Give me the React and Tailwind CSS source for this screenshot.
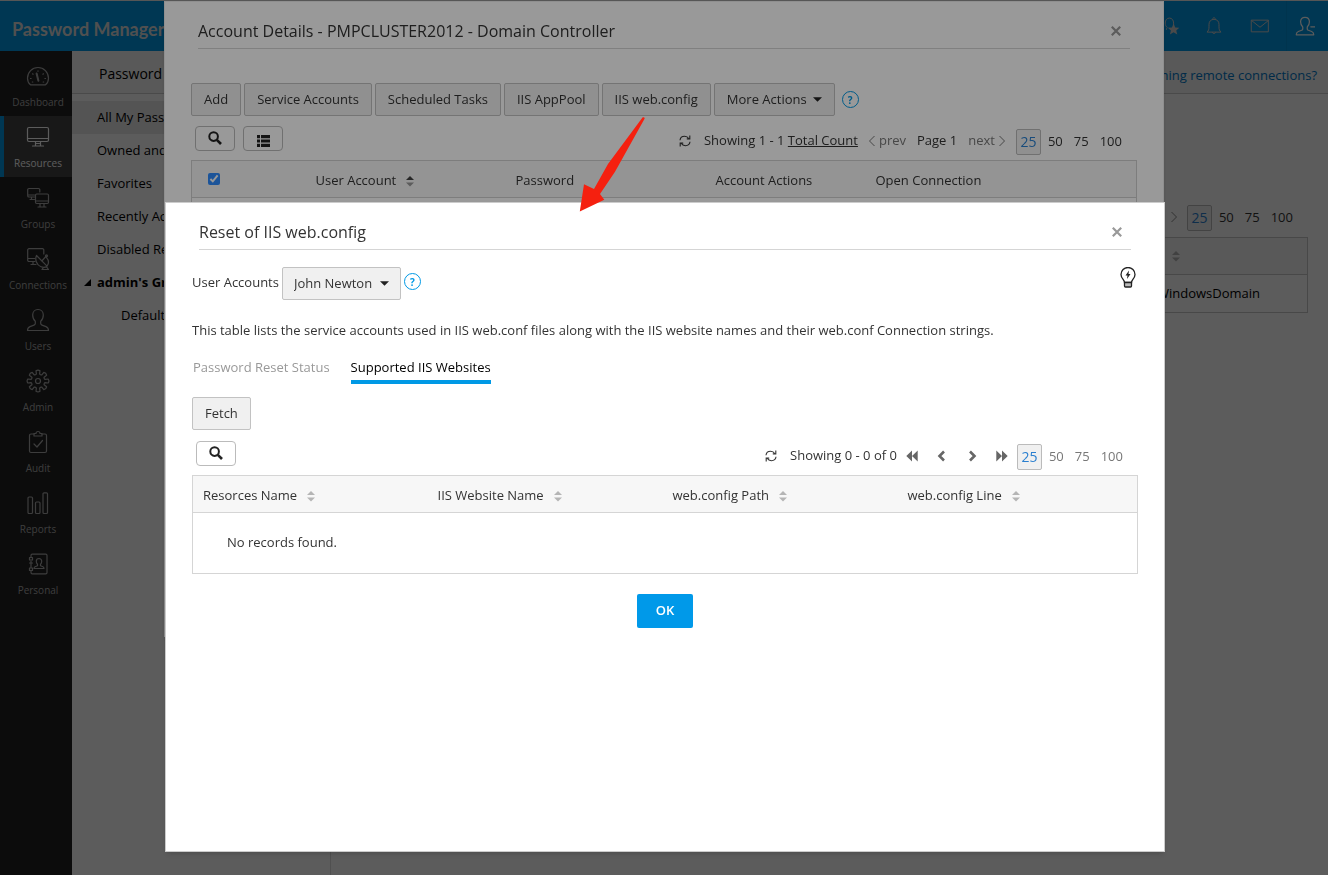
import React from 'react';

const svgProps = {
  viewBox: '0 0 24 24',
  fill: 'none',
  stroke: 'currentColor',
  strokeWidth: 1.2,
  strokeLinejoin: 'round',
  strokeLinecap: 'round',
  'aria-hidden': true
};

const PERSON_PATH =
  'M12 1.500c-3.200 0-5.300 2.300-5.300 5.500 0 2.600 1 4.900 2.600 6.200v2.300c0 .8-.5 1.300-1.300 1.600l-4 1.500c-1.800.7-2.500 1.900-2.500 3.900h21c0-2-.7-3.200-2.500-3.900l-4-1.500c-.8-.3-1.300-.8-1.300-1.600v-2.300c1.600-1.300 2.600-3.600 2.600-6.200 0-3.200-2.100-5.500-5.300-5.500z';

// Eight rounded teeth around a centre point
const gearPath = () => {
  const point = (radius, degrees) => {
    const rad = (degrees * Math.PI) / 180;
    return `${(12 + radius * Math.cos(rad)).toFixed(2)} ${(12 + radius * Math.sin(rad)).toFixed(2)}`;
  };
  let path = '';
  for (let i = 0; i < 8; i++) {
    const a = i * 45 - 90;
    path += `${i === 0 ? 'M' : 'L'}${point(7.2, a - 13)} L${point(10.4, a - 11)} Q${point(11.600, a)} ${point(10.4, a + 11)} L${point(7.2, a + 13)} Q${point(6.3, a + 22.5)} ${point(7.2, a + 32)} `;
  }
  return `${path}Z`;
};

const icons = {
  dashboard: (
    <>
      <path d="M4.500 20.800h15c2-1.600 3-3.900 3-6.600C22.500 8.300 17.800 3.500 12 3.500S1.500 8.300 1.500 14.200c0 2.700 1 5 3 6.600z" />
      <path d="M10.600 9.500l1.800 7.200" strokeWidth="2" />
      <path d="M4.500 14.500h.6M18.900 14.500h.6M6.600 9.800l.5.400M16.900 10.200l.5-.4M12 6.800v.5M6.300 18h.5M17.200 18h.5" />
    </>
  ),
  resources: (
    <>
      <rect x="1.500" y="2.500" width="21" height="14" rx="1.500" />
      <path d="M1.500 13.500h21M9.500 16.500v4M14.500 16.500v4M6.500 21h11M10.500 18.500h3" />
    </>
  ),
  groups: (
    <>
      <path d="M8.500 11H3a1.300 1.300 0 0 1-1.300-1.300V3.800A1.300 1.300 0 0 1 3 2.500h9.500a1.300 1.300 0 0 1 1.300 1.300V6M1.700 9h6.800M4 13.500h4.500M5.500 11v2.500" />
      <rect x="9.500" y="8" width="13" height="9.500" rx="1.200" />
      <path d="M9.500 15h13M14 17.500V21M18 17.500V21M12 21h8" />
    </>
  ),
  connections: (
    <>
      <path d="M9 14.500H3a1.300 1.300 0 0 1-1.300-1.300V3A1.300 1.300 0 0 1 3 1.700h13.500A1.300 1.300 0 0 1 17.800 3v4M1.700 11.500h7M5 17.500h5M7 14.500v3" />
      <path d="M10.500 8.500c-1.800 4 0 9.700 4.500 11.300 2.200.8 4.500.5 6-.6zM21 19.200c1.800-2.500 1.800-6-.5-8.500M15.800 14l4.500-5M17.500 20.300l-1.500 2.200h6.500l-2-2.700" />
      <circle cx="20.500" cy="8.800" r="1" />
    </>
  ),
  users: <path d={PERSON_PATH} />,
  admin: (
    <>
      <path d={gearPath()} />
      <circle cx="12" cy="12" r="2.500" />
    </>
  ),
  audit: (
    <>
      <path d="M8 4H5a1.500 1.500 0 0 0-1.500 1.500v15.500A1.500 1.500 0 0 0 5 22.500h14a1.500 1.500 0 0 0 1.500-1.500V5.500A1.500 1.500 0 0 0 19 4h-3" />
      <path d="M8 6V3.500h2c0-1.200.8-2 2-2s2 .8 2 2h2V6zM8 14l3 3 5.500-6.500" />
    </>
  ),
  reports: (
    <>
      <rect x="2" y="6" width="4.500" height="16.500" rx="1" />
      <rect x="9.500" y="11" width="4.500" height="11.500" rx="1" />
      <rect x="17" y="1.800" width="4.500" height="20.700" rx="1" />
    </>
  ),
  personal: (
    <>
      <path d="M5 5.500V3.500a1.300 1.300 0 0 1 1.300-1.300h13.400A1.300 1.300 0 0 1 21 3.500v17a1.300 1.300 0 0 1-1.300 1.300H6.300A1.300 1.300 0 0 1 5 20.500v-2M5 9v6.500" />
      <path d="M3.500 5.500h3v2.500h-3zM3.500 16h3v2.500h-3zM3.500 11h3" />
      <path d="M13 6.500c-1.700 0-2.700 1.200-2.700 2.800 0 1.200.5 2.300 1.200 2.900v1.500l-2.500 1c-.7.300-1 1-1 1.800h10c0-.8-.3-1.500-1-1.800l-2.500-1v-1.500c.7-.6 1.200-1.700 1.200-2.900 0-1.600-1-2.800-2.700-2.800z" />
    </>
  )
};

const navItems = [
  { icon: 'dashboard', label: 'Dashboard' },
  { icon: 'resources', label: 'Resources', active: true },
  { icon: 'groups', label: 'Groups' },
  { icon: 'connections', label: 'Connections' },
  { icon: 'users', label: 'Users' },
  { icon: 'admin', label: 'Admin' },
  { icon: 'audit', label: 'Audit' },
  { icon: 'reports', label: 'Reports' },
  { icon: 'personal', label: 'Personal' }
];

const views = ['All My Passwords', 'Owned and Managed', 'Favorites', 'Recently Accessed', 'Disabled Resources'];

function SortIcon({ asc = false }) {
  return (
    <svg viewBox="0 0 8 12" className="w-2 h-3 shrink-0" aria-hidden="true">
      <path d="M0 5L4 1l4 4z" fill={asc ? '#444' : '#b5b5b5'} />
      <path d="M0 7.500h8l-4 4z" fill={asc ? '#999' : '#b5b5b5'} />
    </svg>
  );
}

function Caret() {
  return (
    <svg viewBox="0 0 10 5" className="w-[9px] h-[5px]" aria-hidden="true">
      <path d="M0 0h10L5 5z" fill="#222" />
    </svg>
  );
}

function SearchButton() {
  return (
    <button type="button" aria-label="Search" className="flex h-[25px] w-10 items-center justify-center rounded border border-[#bbb] bg-white pb-0.5">
      <svg viewBox="0 0 14 14" className="w-3.5 h-3.5" fill="none" stroke="#222" aria-hidden="true">
        <circle cx="5.600" cy="5.600" r="4.300" strokeWidth="2" />
        <path d="M8.800 8.800l4.200 4.200" strokeWidth="2.600" />
      </svg>
    </button>
  );
}

function RefreshButton() {
  return (
    <button type="button" aria-label="Refresh">
      <svg viewBox="0 0 12 12" className="w-3 h-3" fill="none" stroke="#333" strokeWidth="1.100" aria-hidden="true">
        <path d="M1 5.200C1.300 2.600 3.300 1.300 5.600 1.300c1.900 0 3.200.7 4.300 2.400M11 6.800c-.3 2.600-2.300 3.900-4.600 3.900-1.900 0-3.200-.7-4.300-2.400" />
        <path d="M10.800.5v3.400H7.800M1.200 11.500V8.100h3" />
      </svg>
    </button>
  );
}

function HelpButton() {
  return (
    <button
      type="button"
      aria-label="Help"
      className="flex h-[17px] w-[17px] items-center justify-center rounded-full border-[1.5px] border-[#0099e5] text-[10px] leading-none font-bold text-[#0099e5]"
    >
      ?
    </button>
  );
}

function PageSizes({ muted = false }) {
  return (
    <div className={`mt-0.5 flex items-center gap-[11px] text-[13px] ${muted ? 'text-[#777]' : 'text-[#333]'}`}>
      <button
        type="button"
        className="-mr-1 flex h-[26px] w-[25px] items-center justify-center rounded-xs border border-[#bbb] bg-[#f0f0f0] text-sm font-medium text-[#2a7fcf]"
      >
        25
      </button>
      <button type="button">50</button>
      <button type="button">75</button>
      <button type="button">100</button>
    </div>
  );
}

function CloseButton() {
  return (
    <button type="button" aria-label="Close" className="text-[#999]">
      <svg viewBox="0 0 10 10" className="w-2.5 h-2.5" stroke="currentColor" strokeWidth="2.200" aria-hidden="true">
        <path d="M.8.800l8.400 8.400M9.200.800L.8 9.200" />
      </svg>
    </button>
  );
}

function GreyButton({ children }) {
  return (
    <button type="button" className="flex h-[33px] items-center gap-1.5 rounded-xs border border-[#c2c2c2] bg-[#f0f0f0] px-3 whitespace-nowrap text-[#333]">
      {children}
    </button>
  );
}

function DialogTitle({ children }) {
  return (
    <div className="mx-[7px] flex h-[47px] items-center justify-between border-b border-[#d5d5d5] pt-3 pr-[9px]">
      <h2 className="text-base leading-5 text-[#333]">{children}</h2>
      <CloseButton />
    </div>
  );
}

function TopBar() {
  return (
    <header className="flex h-[50px] items-center justify-between bg-[#0099e5] pl-3">
      <h1 className="pt-1.5 font-[Lato,sans-serif] text-lg font-bold whitespace-nowrap text-[#ddd]">Password Manager Pro</h1>
      <div className="flex h-full items-center text-[#ccc]">
        <button type="button" aria-label="Favorite users" className="mr-[25px]">
          <svg {...svgProps} className="w-5 h-5">
            <path d="M9 16c0-1 .3-1.600 1-2-1.500-1.200-2.500-3-2.500-5.500C7.500 5 9.500 2.500 12.500 2.500S17.500 5 17.500 8.500V11" />
            <path d="M17.500 9l2 4.700 5 .4-3.800 3.200 1.200 4.900-4.400-2.700-4.400 2.700 1.200-4.900-3.800-3.200 5-.4z" fill="currentColor" stroke="none" />
          </svg>
        </button>
        <button type="button" aria-label="Notifications" className="mr-[26px]">
          <svg {...svgProps} className="w-5 h-5">
            <path d="M4 19c1.500-1.500 2-3 2-6v-3c0-3.500 2.300-6 6-6s6 2.500 6 6v3c0 3 .5 4.500 2 6zM10.500 4c0-3 3-3 3 0M10 19.500c.3 2.300 3.700 2.300 4 0" />
          </svg>
        </button>
        <button type="button" aria-label="Messages" className="mr-4">
          <svg {...svgProps} className="w-5 h-5">
            <path d="M2 5h20v14H2zM2 5.500l10 8 10-8" />
          </svg>
        </button>
        <button type="button" aria-label="My account" className="flex h-full items-center border-l border-[#0090d8] pr-[13px] pl-2 text-white">
          <svg {...svgProps} strokeWidth="1.500" className="w-5 h-5">
            <path d={PERSON_PATH} />
            <path d="M19 13h5" />
          </svg>
        </button>
      </div>
    </header>
  );
}

function SideNav() {
  return (
    <nav className="w-[72px] shrink-0 bg-[#222] pt-1">
      {navItems.map((item) => (
        <a
          key={item.label}
          href="#"
          className={`flex h-[61px] flex-col items-center border-l-4 pt-[9px] text-[10px] ${
            item.active ? 'border-[#0099e5] bg-[#444] text-white' : 'border-transparent text-[#aaa]'
          }`}
        >
          <svg {...svgProps} className="w-6 h-6 shrink-0">{icons[item.icon]}</svg>
          <span className="mt-1.5 leading-4">{item.label}</span>
        </a>
      ))}
    </nav>
  );
}

function ViewsPanel() {
  return (
    <aside className="w-[259px] shrink-0 border-r border-[#ddd] text-[13px] text-black">
      <div className="flex h-[43px] items-center border-b border-[#ccc] bg-[#f5f5f5] pt-1 pl-[27px] text-sm">Password Views</div>
      <ul className="pt-[7px]">
        {views.map((view, i) => (
          <li key={view}>
            <a href="#" className={`flex h-[33px] items-center pl-[25px] whitespace-nowrap ${i === 0 ? 'bg-[#e8e8e8]' : ''}`}>
              {view}
            </a>
          </li>
        ))}
        <li>
          <a href="#" className="flex h-[33px] items-center gap-1.5 pl-3 font-bold whitespace-nowrap">
            <svg viewBox="0 0 7 7" className="w-[7px] h-[7px]" aria-hidden="true">
              <path d="M7 0v7H0z" />
            </svg>
            admin's Groups
          </a>
        </li>
        <li>
          <a href="#" className="flex h-[33px] items-center pl-[49px]">Default Group</a>
        </li>
      </ul>
    </aside>
  );
}

function ResourcesPage() {
  return (
    <main className="min-w-0 flex-1 text-[13px]">
      <div className="flex h-[43px] items-center justify-end border-b border-[#ccc] bg-[#f5f5f5] pt-2 pr-[11px]">
        <a href="#" className="whitespace-nowrap text-[#0078c8]">Trouble launching remote connections?</a>
      </div>
      <div className="pt-[109px] pr-5 pl-5">
        <div className="flex items-center justify-end gap-2.5 pr-[15px]">
          <svg viewBox="0 0 6 12" className="w-1.5 h-3" fill="none" stroke="#888" aria-hidden="true">
            <path d="M.5 1l5 5-5 5" />
          </svg>
          <PageSizes />
        </div>
        <table className="mt-[6px] w-full border border-[#c8c8c8] text-left">
          <thead>
            <tr className="h-[37px] border-b border-[#c8c8c8] bg-[#f7f7f7]">
              <th aria-label="Resource" />
              <th aria-label="Type" className="w-[146px] pl-[15px]">
                <SortIcon />
              </th>
            </tr>
          </thead>
          <tbody>
            <tr className="h-[38px]">
              <td />
              <td>
                <div className="flex justify-end pr-[47px] text-black">WindowsDomain</div>
              </td>
            </tr>
          </tbody>
        </table>
      </div>
    </main>
  );
}

function AccountDetailsDialog() {
  return (
    <section className="min-h-[636px] w-full max-w-[1000px] border border-[#eee] bg-white px-[26px] text-[13px] text-[#333] shadow-md">
      <DialogTitle>Account Details - PMPCLUSTER2012 - Domain Controller</DialogTitle>
      <div className="mt-[34px] flex items-center gap-[3px]">
        <GreyButton>Add</GreyButton>
        <GreyButton>Service Accounts</GreyButton>
        <GreyButton>Scheduled Tasks</GreyButton>
        <GreyButton>IIS AppPool</GreyButton>
        <GreyButton>IIS web.config</GreyButton>
        <GreyButton>
          More Actions
          <Caret />
        </GreyButton>
        <div className="pl-1">
          <HelpButton />
        </div>
      </div>
      <div className="mt-2.5 flex h-[29px] items-center justify-between pr-[15px] pl-1">
        <div className="flex gap-2 pb-1">
          <SearchButton />
          <button type="button" aria-label="Columns" className="flex h-[25px] w-10 items-center justify-center rounded border border-[#bbb] bg-white">
            <svg viewBox="0 0 13 12" className="mt-1 w-[13px] h-3" fill="#222" aria-hidden="true">
              <path d="M0 0h3v3.200H0zM4 0h9v3.200H4zM0 4.400h3v3.200H0zM4 4.400h9v3.200H4zM0 8.800h3V12H0zM4 8.800h9V12H4z" />
            </svg>
          </button>
        </div>
        <div className="flex items-center gap-[11px]">
          <RefreshButton />
          <span className="pl-0.5">
            Showing 1 - 1 <a href="#" className="underline">Total Count</a>
          </span>
          <button type="button" className="flex items-center gap-1 text-[#777]">
            <svg viewBox="0 0 6 12" className="w-1.5 h-3" fill="none" stroke="currentColor" aria-hidden="true">
              <path d="M5.500 1l-5 5 5 5" />
            </svg>
            prev
          </button>
          <span>Page 1</span>
          <button type="button" className="flex items-center gap-1 text-[#777]">
            next
            <svg viewBox="0 0 6 12" className="w-1.5 h-3" fill="none" stroke="currentColor" aria-hidden="true">
              <path d="M.5 1l5 5-5 5" />
            </svg>
          </button>
          <PageSizes />
        </div>
      </div>
      <table className="mt-[5px] w-full table-fixed border border-[#d0d0d0] text-left">
        <thead>
          <tr className="h-[37px] border-b border-[#d0d0d0] bg-[#f7f7f7]">
            <th className="w-[124px] pl-4">
              <input type="checkbox" defaultChecked aria-label="Select all accounts" className="block h-3 w-3 accent-[#2f8cff]" />
            </th>
            <th className="w-[200px] pt-1 font-normal">
              <span className="flex items-center gap-2.5">
                User Account
                <SortIcon asc />
              </span>
            </th>
            <th className="w-[200px] pt-1 font-normal">Password</th>
            <th className="w-[160px] pt-1 font-normal">Account Actions</th>
            <th className="pt-1 font-normal">Open Connection</th>
          </tr>
        </thead>
        <tbody>
          <tr className="h-10">
            <td colSpan={5} />
          </tr>
        </tbody>
      </table>
    </section>
  );
}

const pagerArrows = [
  { label: 'First page', d: 'M6 .5L.3 6 6 11.500zM11.700.5L6 6l5.700 5.500z', fill: true },
  { label: 'Previous page', d: 'M8 1.500L3.500 6 8 10.500' },
  { label: 'Next page', d: 'M4 1.500L8.500 6 4 10.500' },
  { label: 'Last page', d: 'M.3.500L6 6 .3 11.500zM6 .5L11.700 6 6 11.500z', fill: true }
];

function ResetDialog() {
  return (
    <section className="relative min-h-[650px] w-full max-w-[1000px] border border-[#ccc] bg-white px-[26px] text-[13px] text-[#333] shadow-md">
      <DialogTitle>Reset of IIS web.config</DialogTitle>
      <div className="mt-[17px] flex h-[33px] items-center justify-between pr-0.5">
        <div className="flex items-center">
          <label htmlFor="user-account" className="pb-0.5">User Accounts</label>
          <div className="relative ml-[3px]">
            <select
              id="user-account"
              className="block h-[33px] appearance-none rounded-xs border border-[#c2c2c2] bg-[#f0f0f0] pr-[27px] pl-[11px]"
            >
              <option>John Newton</option>
            </select>
            <span className="pointer-events-none absolute inset-y-0 right-3 flex items-center">
              <Caret />
            </span>
          </div>
          <div className="pb-1 pl-[3px]">
            <HelpButton />
          </div>
        </div>
        <button type="button" aria-label="Tips" className="pb-3">
          <svg viewBox="0 0 16 21" className="w-4 h-[21px]" fill="none" stroke="#222" strokeWidth="1.300" aria-hidden="true">
            <path d="M4.500 15.500C4.500 12.500 1 11.500 1 7.500a7 7 0 0 1 14 0c0 4-3.500 5-3.500 8z" />
            <path d="M4.500 15.500h7V19q0 1-1 1h-5q-1 0-1-1z" fill="#bbb" />
            <path d="M9 3.500L5.500 8.500h2L7 12l3.500-5h-2z" fill="#222" stroke="none" />
          </svg>
        </button>
      </div>
      <p className="mt-5 leading-5">
        This table lists the service accounts used in IIS web.conf files along with the IIS website names and their web.conf Connection strings.
      </p>
      <div className="mt-[17px] flex gap-[21px]">
        <button type="button" className="h-[27px] pb-[7px] pl-px leading-5 text-[#999]">Password Reset Status</button>
        <button type="button" className="h-[27px] border-b-4 border-[#0099e5] pb-[3px] leading-5 text-black">Supported IIS Websites</button>
      </div>
      <div className="mt-[13px] flex">
        <GreyButton>Fetch</GreyButton>
      </div>
      <div className="mt-[11px] flex h-[29px] items-center justify-between pr-[15px] pl-1">
        <div className="pb-1">
          <SearchButton />
        </div>
        <div className="flex items-center gap-[9px]">
          <RefreshButton />
          <span className="pl-1">Showing 0 - 0 of 0</span>
          <div className="flex items-center gap-[18px]">
            {pagerArrows.map((arrow) => (
              <button key={arrow.label} type="button" aria-label={arrow.label} className="text-[#666]">
                <svg
                  viewBox="0 0 12 12"
                  className="w-3 h-3"
                  fill={arrow.fill ? 'currentColor' : 'none'}
                  stroke={arrow.fill ? 'none' : 'currentColor'}
                  strokeWidth="2.600"
                  aria-hidden="true"
                >
                  <path d={arrow.d} />
                </svg>
              </button>
            ))}
          </div>
          <PageSizes muted />
        </div>
      </div>
      <table className="mt-[5px] w-full table-fixed border border-[#d5d5d5] text-left">
        <thead>
          <tr className="h-[37px] border-b border-[#d5d5d5] bg-[#f7f7f7]">
            {['Resorces Name', 'IIS Website Name', 'web.config Path', 'web.config Line'].map((name) => (
              <th key={name} className="w-[235px] pt-1 pl-2.5 font-normal last:w-auto">
                <span className="flex items-center gap-2.5">
                  {name}
                  <SortIcon />
                </span>
              </th>
            ))}
          </tr>
        </thead>
        <tbody>
          <tr className="h-[61px]">
            <td colSpan={4} className="pl-[34px]">No records found.</td>
          </tr>
        </tbody>
      </table>
      <div className="mt-5 flex justify-center">
        <button type="button" className="h-[34px] w-14 rounded-xs bg-[#0099e9] font-semibold text-white">OK</button>
      </div>
      {/* Arrow from the IIS web.config button down to this dialog */}
      <svg viewBox="0 0 68 96" className="pointer-events-none absolute -top-[87px] left-[413px] h-24 w-[68px]" aria-hidden="true">
        <path d="M63.700 1.300Q65.500.8 65.700 2.500L36 55.700 21 78l4.300 5.700L.8 95.500 5 68.200 15 73l14-25z" fill="#f5200f" />
      </svg>
    </section>
  );
}

export default function App() {
  return (
    <div className="min-h-screen font-['Open_Sans',sans-serif]">
      <div className="flex min-h-screen flex-col border-t border-[#eee] bg-white">
        <TopBar />
        <div className="flex flex-1">
          <SideNav />
          <ViewsPanel />
          <ResourcesPage />
        </div>
      </div>
      <div className="fixed inset-0 flex items-start justify-center bg-black/40 pt-px">
        <AccountDetailsDialog />
      </div>
      <div className="fixed inset-0 flex items-start justify-center bg-black/40 pt-[202px] pl-0.5">
        <ResetDialog />
      </div>
    </div>
  );
}
